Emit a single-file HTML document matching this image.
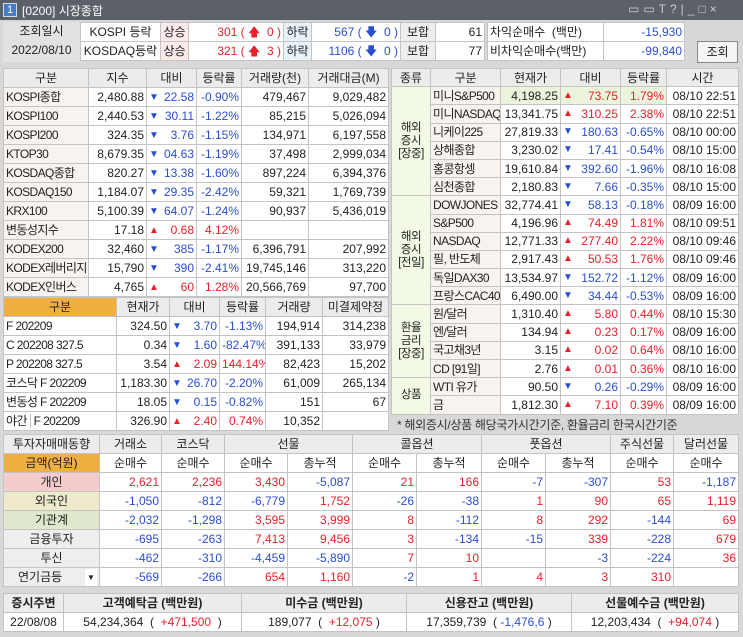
<!DOCTYPE html>
<html><head><meta charset="utf-8"><style>
*{margin:0;padding:0;box-sizing:border-box}
body{width:743px;height:637px;background:#d8d8d8;font-family:"Liberation Sans","Noto Sans CJK KR",sans-serif;font-size:12px;color:#222;position:relative;overflow:hidden}
.t{position:absolute;border-collapse:collapse;table-layout:fixed;background:#fff}
.t td{border:1px solid #c4c4c4;padding:0 2px;white-space:nowrap;overflow:hidden;height:19px;line-height:17px;text-align:right}
.rt td{height:18.2px;line-height:16px}
.h td{background:#ececec;text-align:center}
.l{text-align:left!important;background:#f9f3ef;letter-spacing:-0.6px}
.c{text-align:center!important}
.r{color:#e8202a}.b{color:#2a4ed0}
.tri{float:left;font-size:10px}
.g{background:#f2f9e4!important;line-height:13px!important;white-space:normal!important;text-align:center!important;padding:0!important;font-size:11.5px;letter-spacing:-0.5px}
</style></head><body>
<div style="position:absolute;left:0;top:0;width:743px;height:20px;background:#5c6068"></div>
<div style="position:absolute;left:3px;top:3px;width:14px;height:14px;background:#4a7ac8;border:1px solid #cde;color:#fff;font-size:11px;line-height:12px;text-align:center">1</div>
<div style="position:absolute;left:22px;top:2px;color:#fff;font-size:12px">[0200] 시장종합</div>
<div style="position:absolute;left:628px;top:2px;color:#ccc;font-size:12px;letter-spacing:4px">▭▭T?|_□×</div>

<div style="position:absolute;left:3px;top:22px;width:77px;height:40px;background:#e2e2e2;text-align:center;line-height:19px;font-size:12px">조회일시<br>2022/08/10</div>
<table class="t" style="left:80px;top:22px;width:404px">
<col style="width:80px"><col style="width:28px"><col style="width:95px"><col style="width:28px"><col style="width:89px"><col style="width:35px"><col style="width:49px">
<tr><td class="c">KOSPI 등락</td><td class="c" style="background:#fbeaea">상승</td><td class="r">301 ( 🡅 &nbsp;0 )</td><td class="c" style="background:#e8f2fb">하락</td><td class="b">567 ( 🡇 &nbsp;0 )</td><td class="c" style="background:#eee">보합</td><td>61</td></tr>
<tr><td class="c">KOSDAQ등락</td><td class="c" style="background:#fbeaea">상승</td><td class="r">321 ( 🡅 &nbsp;3 )</td><td class="c" style="background:#e8f2fb">하락</td><td class="b">1106 ( 🡇 &nbsp;0 )</td><td class="c" style="background:#eee">보합</td><td>77</td></tr>
</table>
<table class="t" style="left:487px;top:22px;width:197px">
<col style="width:116px"><col style="width:81px">
<tr><td style="text-align:left">차익순매수 &nbsp;(백만)</td><td class="b">-15,930</td></tr>
<tr><td style="text-align:left">비차익순매수(백만)</td><td class="b">-99,840</td></tr>
</table>
<div style="position:absolute;left:697px;top:41px;width:41px;height:22px;background:#f4f4f4;border:1px solid #888;text-align:center;line-height:20px">조회</div>

<table class="t" style="left:3px;top:68px;width:385px">
<col style="width:85px"><col style="width:58px"><col style="width:50px"><col style="width:45px"><col style="width:67px"><col style="width:80px">
<tr class="h"><td>구분</td><td>지수</td><td>대비</td><td>등락률</td><td>거래량(천)</td><td>거래대금(M)</td></tr>
<tr><td class="l">KOSPI종합</td><td>2,480.88</td><td class="b"><span class="tri">▼</span>22.58</td><td class="b">-0.90%</td><td>479,467</td><td>9,029,482</td></tr>
<tr><td class="l">KOSPI100</td><td>2,440.53</td><td class="b"><span class="tri">▼</span>30.11</td><td class="b">-1.22%</td><td>85,215</td><td>5,026,094</td></tr>
<tr><td class="l">KOSPI200</td><td>324.35</td><td class="b"><span class="tri">▼</span>3.76</td><td class="b">-1.15%</td><td>134,971</td><td>6,197,558</td></tr>
<tr><td class="l">KTOP30</td><td>8,679.35</td><td class="b"><span class="tri">▼</span>04.63</td><td class="b">-1.19%</td><td>37,498</td><td>2,999,034</td></tr>
<tr><td class="l">KOSDAQ종합</td><td>820.27</td><td class="b"><span class="tri">▼</span>13.38</td><td class="b">-1.60%</td><td>897,224</td><td>6,394,376</td></tr>
<tr><td class="l">KOSDAQ150</td><td>1,184.07</td><td class="b"><span class="tri">▼</span>29.35</td><td class="b">-2.42%</td><td>59,321</td><td>1,769,739</td></tr>
<tr><td class="l">KRX100</td><td>5,100.39</td><td class="b"><span class="tri">▼</span>64.07</td><td class="b">-1.24%</td><td>90,937</td><td>5,436,019</td></tr>
<tr><td class="l">변동성지수</td><td>17.18</td><td class="r"><span class="tri">▲</span>0.68</td><td class="r">4.12%</td><td></td><td></td></tr>
<tr><td class="l">KODEX200</td><td>32,460</td><td class="b"><span class="tri">▼</span>385</td><td class="b">-1.17%</td><td>6,396,791</td><td>207,992</td></tr>
<tr><td class="l">KODEX레버리지</td><td>15,790</td><td class="b"><span class="tri">▼</span>390</td><td class="b">-2.41%</td><td>19,745,146</td><td>313,220</td></tr>
<tr><td class="l">KODEX인버스</td><td>4,765</td><td class="r"><span class="tri">▲</span>60</td><td class="r">1.28%</td><td>20,566,769</td><td>97,700</td></tr>
</table>

<table class="t" style="left:3px;top:297px;width:385px">
<col style="width:113px"><col style="width:53px"><col style="width:50px"><col style="width:46px"><col style="width:57px"><col style="width:66px">
<tr class="h"><td style="background:#f0b040">구분</td><td>현재가</td><td>대비</td><td>등락률</td><td>거래량</td><td>미결제약정</td></tr>
<tr><td class="l" style="background:#fff">F 202209</td><td>324.50</td><td class="b"><span class="tri">▼</span>3.70</td><td class="b">-1.13%</td><td>194,914</td><td>314,238</td></tr>
<tr><td class="l" style="background:#fff">C 202208 327.5</td><td>0.34</td><td class="b"><span class="tri">▼</span>1.60</td><td class="b">-82.47%</td><td>391,133</td><td>33,979</td></tr>
<tr><td class="l" style="background:#fff">P 202208 327.5</td><td>3.54</td><td class="r"><span class="tri">▲</span>2.09</td><td class="r">144.14%</td><td>82,423</td><td>15,202</td></tr>
<tr><td class="l" style="background:#fff">코스닥 F 202209</td><td>1,183.30</td><td class="b"><span class="tri">▼</span>26.70</td><td class="b">-2.20%</td><td>61,009</td><td>265,134</td></tr>
<tr><td class="l" style="background:#fff">변동성 F 202209</td><td>18.05</td><td class="b"><span class="tri">▼</span>0.15</td><td class="b">-0.82%</td><td>151</td><td>67</td></tr>
<tr><td class="l" style="background:#fff"><span style="border-right:1px solid #bbb;padding-right:3px">야간</span> F 202209</td><td>326.90</td><td class="r"><span class="tri">▲</span>2.40</td><td class="r">0.74%</td><td>10,352</td><td></td></tr>
</table>

<table class="t rt" style="left:391px;top:68px;width:347px">
<col style="width:39px"><col style="width:70px"><col style="width:60px"><col style="width:60px"><col style="width:46px"><col style="width:72px">
<tr class="h"><td>종류</td><td>구분</td><td>현재가</td><td>대비</td><td>등락률</td><td>시간</td></tr>
<tr><td rowspan="6" class="g">해외<br>증시<br>[장중]</td><td class="l">미니S&amp;P500</td><td style="background:#eaf5dc">4,198.25</td><td class="r" style="background:#eaf5dc"><span class="tri">▲</span>73.75</td><td class="r" style="background:#eaf5dc">1.79%</td><td>08/10 22:51</td></tr>
<tr><td class="l">미니NASDAQ</td><td>13,341.75</td><td class="r"><span class="tri">▲</span>310.25</td><td class="r">2.38%</td><td>08/10 22:51</td></tr>
<tr><td class="l">니케이225</td><td>27,819.33</td><td class="b"><span class="tri">▼</span>180.63</td><td class="b">-0.65%</td><td>08/10 00:00</td></tr>
<tr><td class="l">상해종합</td><td>3,230.02</td><td class="b"><span class="tri">▼</span>17.41</td><td class="b">-0.54%</td><td>08/10 15:00</td></tr>
<tr><td class="l">홍콩항셍</td><td>19,610.84</td><td class="b"><span class="tri">▼</span>392.60</td><td class="b">-1.96%</td><td>08/10 16:08</td></tr>
<tr><td class="l">심천종합</td><td>2,180.83</td><td class="b"><span class="tri">▼</span>7.66</td><td class="b">-0.35%</td><td>08/10 15:00</td></tr>
<tr><td rowspan="6" class="g">해외<br>증시<br>[전일]</td><td class="l">DOWJONES</td><td>32,774.41</td><td class="b"><span class="tri">▼</span>58.13</td><td class="b">-0.18%</td><td>08/09 16:00</td></tr>
<tr><td class="l">S&amp;P500</td><td>4,196.96</td><td class="r"><span class="tri">▲</span>74.49</td><td class="r">1.81%</td><td>08/10 09:51</td></tr>
<tr><td class="l">NASDAQ</td><td>12,771.33</td><td class="r"><span class="tri">▲</span>277.40</td><td class="r">2.22%</td><td>08/10 09:46</td></tr>
<tr><td class="l">필, 반도체</td><td>2,917.43</td><td class="r"><span class="tri">▲</span>50.53</td><td class="r">1.76%</td><td>08/10 09:46</td></tr>
<tr><td class="l">독일DAX30</td><td>13,534.97</td><td class="b"><span class="tri">▼</span>152.72</td><td class="b">-1.12%</td><td>08/09 16:00</td></tr>
<tr><td class="l">프랑스CAC40</td><td>6,490.00</td><td class="b"><span class="tri">▼</span>34.44</td><td class="b">-0.53%</td><td>08/09 16:00</td></tr>
<tr><td rowspan="4" class="g">환율<br>금리<br>[장중]</td><td class="l">원/달러</td><td>1,310.40</td><td class="r"><span class="tri">▲</span>5.80</td><td class="r">0.44%</td><td>08/10 15:30</td></tr>
<tr><td class="l">엔/달러</td><td>134.94</td><td class="r"><span class="tri">▲</span>0.23</td><td class="r">0.17%</td><td>08/09 16:00</td></tr>
<tr><td class="l">국고채3년</td><td>3.15</td><td class="r"><span class="tri">▲</span>0.02</td><td class="r">0.64%</td><td>08/10 16:00</td></tr>
<tr><td class="l">CD [91일]</td><td>2.76</td><td class="r"><span class="tri">▲</span>0.01</td><td class="r">0.36%</td><td>08/10 16:00</td></tr>
<tr><td rowspan="2" class="g">상품</td><td class="l">WTI 유가</td><td>90.50</td><td class="b"><span class="tri">▼</span>0.26</td><td class="b">-0.29%</td><td>08/09 16:00</td></tr>
<tr><td class="l">금</td><td>1,812.30</td><td class="r"><span class="tri">▲</span>7.10</td><td class="r">0.39%</td><td>08/09 16:00</td></tr>
</table>
<div style="position:absolute;left:391px;top:416px;width:347px;height:17px;background:#d8d8d8;font-size:12px;color:#333;padding-left:6px;letter-spacing:-0.3px">* 해외증시/상품 해당국가시간기준, 환율금리 한국시간기준</div>

<table class="t" style="left:3px;top:434px;width:735px">
<col style="width:96px"><col style="width:62px"><col style="width:63px"><col style="width:63px"><col style="width:65px"><col style="width:64px"><col style="width:65px"><col style="width:64px"><col style="width:65px"><col style="width:63px"><col style="width:65px">
<tr class="h"><td>투자자매매동향</td><td>거래소</td><td>코스닥</td><td colspan="2">선물</td><td colspan="2">콜옵션</td><td colspan="2">풋옵션</td><td>주식선물</td><td>달러선물</td></tr>
<tr class="h"><td style="background:#f0b040">금액(억원)</td><td style="background:#fff">순매수</td><td style="background:#fff">순매수</td><td style="background:#fff">순매수</td><td style="background:#fff">총누적</td><td style="background:#fff">순매수</td><td style="background:#fff">총누적</td><td style="background:#fff">순매수</td><td style="background:#fff">총누적</td><td style="background:#fff">순매수</td><td style="background:#fff">순매수</td></tr>
<tr><td class="c" style="background:#f4cccc">개인</td><td class="r">2,621</td><td class="r">2,236</td><td class="r">3,430</td><td class="b">-5,087</td><td class="r">21</td><td class="r">166</td><td class="b">-7</td><td class="b">-307</td><td class="r">53</td><td class="b">-1,187</td></tr>
<tr><td class="c" style="background:#eeeacb">외국인</td><td class="b">-1,050</td><td class="b">-812</td><td class="b">-6,779</td><td class="r">1,752</td><td class="b">-26</td><td class="b">-38</td><td class="r">1</td><td class="r">90</td><td class="r">65</td><td class="r">1,119</td></tr>
<tr><td class="c" style="background:#dfe8cc">기관계</td><td class="b">-2,032</td><td class="b">-1,298</td><td class="r">3,595</td><td class="r">3,999</td><td class="r">8</td><td class="b">-112</td><td class="r">8</td><td class="r">292</td><td class="b">-144</td><td class="r">69</td></tr>
<tr><td class="c" style="background:#eee">금융투자</td><td class="b">-695</td><td class="b">-263</td><td class="r">7,413</td><td class="r">9,456</td><td class="r">3</td><td class="b">-134</td><td class="b">-15</td><td class="r">339</td><td class="b">-228</td><td class="r">679</td></tr>
<tr><td class="c" style="background:#eee">투신</td><td class="b">-462</td><td class="b">-310</td><td class="b">-4,459</td><td class="b">-5,890</td><td class="r">7</td><td class="r">10</td><td></td><td class="b">-3</td><td class="b">-224</td><td class="r">36</td></tr>
<tr><td style="background:#eee;text-align:left;padding-left:14px">연기금등<span style="float:right;background:#fff;width:12px;text-align:center;font-size:8px">▼</span></td><td class="b">-569</td><td class="b">-266</td><td class="r">654</td><td class="r">1,160</td><td class="b">-2</td><td class="r">1</td><td class="r">4</td><td class="r">3</td><td class="r">310</td><td></td></tr>
</table>

<table class="t" style="left:3px;top:593px;width:735px">
<col style="width:60px"><col style="width:178px"><col style="width:165px"><col style="width:165px"><col style="width:167px">
<tr class="h"><td style="font-weight:bold">증시주변</td><td style="font-weight:bold">고객예탁금 (백만원)</td><td style="font-weight:bold">미수금 (백만원)</td><td style="font-weight:bold">신용잔고 (백만원)</td><td style="font-weight:bold">선물예수금 (백만원)</td></tr>
<tr><td class="c">22/08/08</td><td class="c">54,234,364 &nbsp;( &nbsp;<span class="r">+471,500</span> &nbsp;)</td><td class="c">189,077 &nbsp;( &nbsp;<span class="r">+12,075</span> )</td><td class="c">17,359,739 &nbsp;( <span class="b">-1,476,6</span> )</td><td class="c">12,203,434 &nbsp;( &nbsp;<span class="r">+94,074</span> )</td></tr>
</table>
</body></html>
